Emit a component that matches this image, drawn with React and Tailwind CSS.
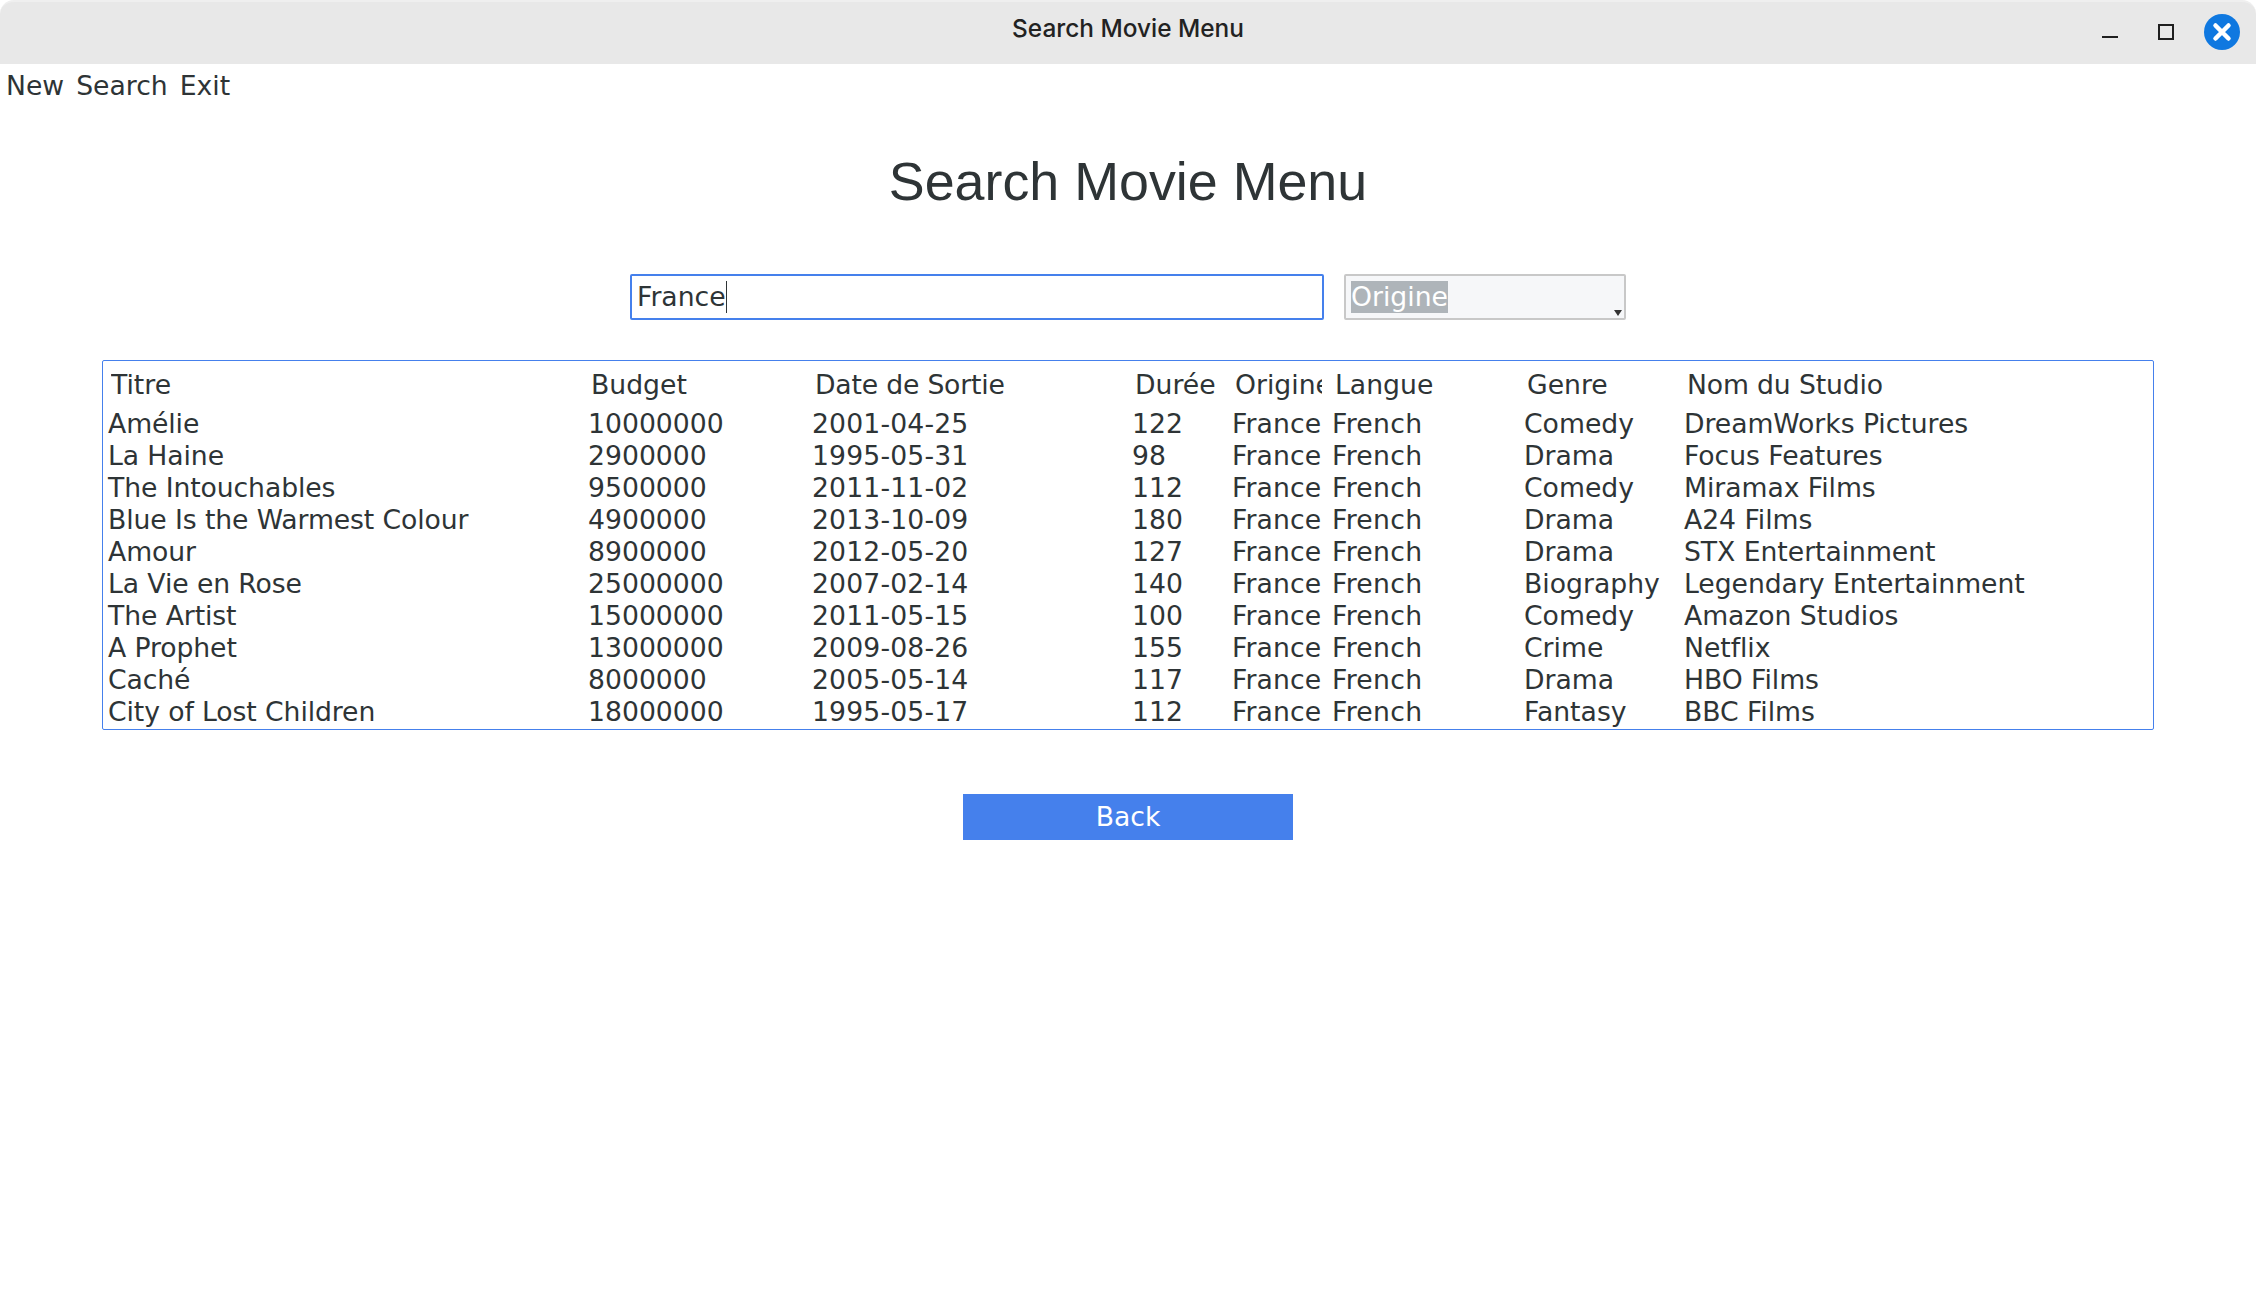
const cols = "grid grid-cols-[480px_224px_320px_100px_100px_192px_160px_1fr]";
const rows = [
  ["Amélie","10000000","2001-04-25","122","France","French","Comedy","DreamWorks Pictures"],
  ["La Haine","2900000","1995-05-31","98","France","French","Drama","Focus Features"],
  ["The Intouchables","9500000","2011-11-02","112","France","French","Comedy","Miramax Films"],
  ["Blue Is the Warmest Colour","4900000","2013-10-09","180","France","French","Drama","A24 Films"],
  ["Amour","8900000","2012-05-20","127","France","French","Drama","STX Entertainment"],
  ["La Vie en Rose","25000000","2007-02-14","140","France","French","Biography","Legendary Entertainment"],
  ["The Artist","15000000","2011-05-15","100","France","French","Comedy","Amazon Studios"],
  ["A Prophet","13000000","2009-08-26","155","France","French","Crime","Netflix"],
  ["Caché","8000000","2005-05-14","117","France","French","Drama","HBO Films"],
  ["City of Lost Children","18000000","1995-05-17","112","France","French","Fantasy","BBC Films"],
];
const heads = ["Titre","Budget","Date de Sortie","Durée","Origine","Langue","Genre","Nom du Studio"];
const track = ["tracking-[-0.1px]","","tracking-[0.15px]","","tracking-[0.1px]","tracking-[0.3px]","","tracking-[-0.05px]"];
const headTrack = ["","","tracking-[-0.2px]","","","","","tracking-[-0.15px]"];

export default function App() {
  return (
    <div className="w-[2256px] h-[1309px] bg-white overflow-hidden flex flex-col text-[#2e3436] text-[26.67px] font-['DejaVu_Sans',sans-serif]">
      <header className="h-[64px] shrink-0 rounded-t-[14px] bg-[#e8e8e8] border-t-2 border-[#efefef] relative flex items-center justify-center">
        <span className="text-[24.4px] text-[#222] -mt-[9px] font-['Inter',sans-serif] font-medium">Search Movie Menu</span>
        <div className="absolute right-[16px] top-[12px] flex items-center">
          <svg width="16" height="36" viewBox="0 0 16 36" className="mr-[40px]"><rect x="0" y="22" width="16" height="2" fill="#1f1f1f"/></svg>
          <svg width="16" height="16" viewBox="0 0 16 16" className="mr-[30px]"><rect x="1" y="1" width="14" height="14" fill="none" stroke="#1f1f1f" strokeWidth="2"/></svg>
          <svg width="36" height="36" viewBox="0 0 36 36"><circle cx="18" cy="18" r="18" fill="#0f78e0"/><path d="M11.5 11.5 L24.5 24.5 M24.5 11.5 L11.5 24.5" stroke="#fff" strokeWidth="4.5" strokeLinecap="round"/></svg>
        </div>
      </header>
      <nav className="h-[44px] flex items-center pl-[6px] gap-[12px] leading-[44px]">
        <span>New</span><span>Search</span><span>Exit</span>
      </nav>
      <h1 className="text-center text-[53.8px] leading-[64px] mt-[41px] font-['Liberation_Sans',sans-serif]">Search Movie Menu</h1>
      <div className="flex justify-center items-stretch gap-[20px] mt-[61px] h-[46px]">
        <div className="w-[694px] border-2 border-[#4580ec] rounded-[2px] flex items-center pl-[5px] bg-white">
          <span>France</span><span className="w-px h-[32px] bg-[#2e3436]"></span>
        </div>
        <div className="w-[282px] border-2 border-[#c8c8c8] rounded-[2px] bg-[#f6f7f9] relative flex items-center pl-[5px]">
          <span className="bg-[#aeb4b9] text-white leading-[32px]">Origine</span>
          <svg width="8" height="6" viewBox="0 0 8 6" className="absolute right-[2px] bottom-[2px]"><path d="M0 0 H8 L4 6 Z" fill="#333"/></svg>
        </div>
      </div>
      <div className="mx-[102px] mt-[40px] h-[370px] border border-[#4580ec] rounded-[2px] pl-[5px] pt-px">
        <div className={cols + " h-[46px] items-center leading-[46px] pl-[3px]"}>
          {heads.map((h, i) => <div key={h} className={"overflow-hidden whitespace-nowrap " + (i === 4 ? "w-[87px] " : "") + headTrack[i]}>{h}</div>)}
        </div>
        {rows.map((r) => (
          <div key={r[0]} className={cols + " h-[32px] leading-[32px]"}>
            {r.map((c, i) => <div key={i} className={"whitespace-nowrap " + track[i]}>{c}</div>)}
          </div>
        ))}
      </div>
      <div className="flex justify-center mt-[64px]">
        <button className="w-[330px] h-[46px] bg-[#4580ec] text-white text-[26.67px]">Back</button>
      </div>
    </div>
  );
}
